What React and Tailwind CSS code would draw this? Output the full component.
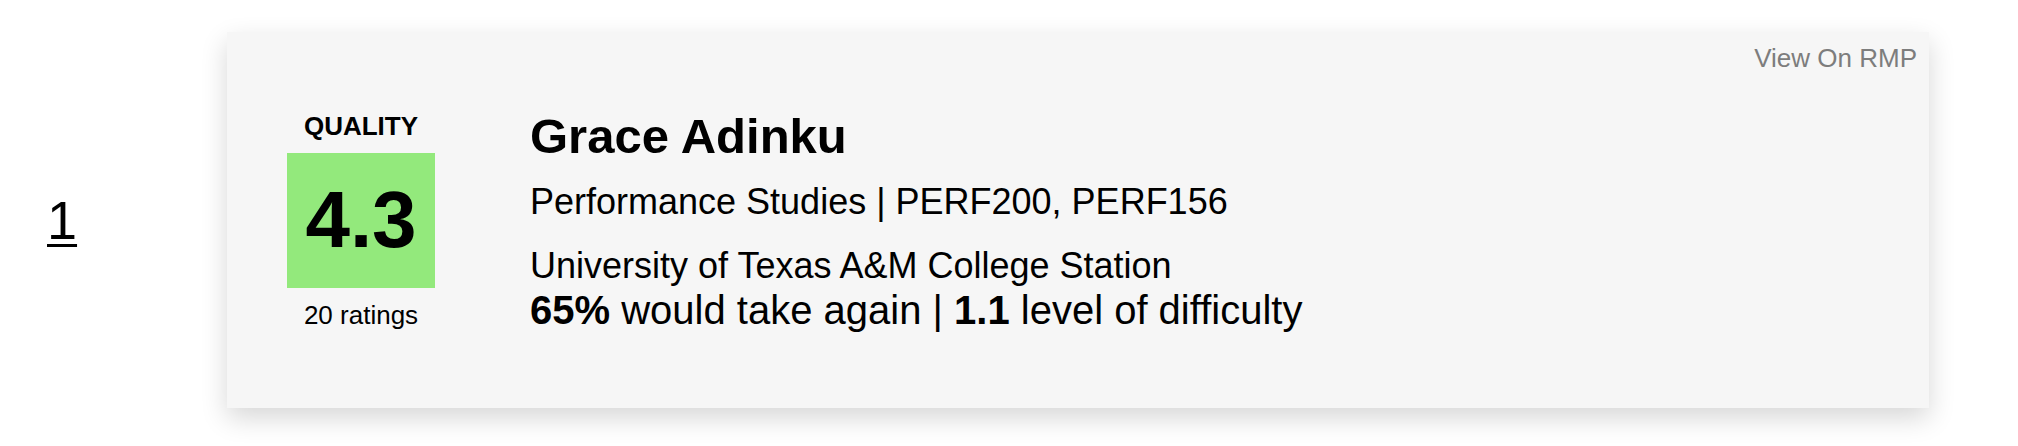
import React from 'react';

const professor = {
    rank: 1,
    name: 'Grace Adinku',
    department: 'Performance Studies',
    courses: ['PERF200', 'PERF156'],
    school: 'University of Texas A&M College Station',
    quality: '4.3',
    ratings: 20,
    takeAgain: '65%',
    difficulty: '1.1',
};

export default function App() {
    const p = professor;

    return (
        <div className="min-h-screen bg-white font-['Liberation_Sans',Arial,sans-serif] text-black">
            <div className="flex items-center pt-[32px] pl-[47px]">
                {/* Rank */}
                <a className="text-[54px] leading-none underline decoration-[3px] underline-offset-[5px] w-[180px] shrink-0">
                    {p.rank}
                </a>

                {/* Card */}
                <div className="relative flex items-center w-[1702px] h-[376px] bg-[#f6f6f6] pl-[60px] shadow-[0_10px_25px_rgba(0,0,0,0.16)]">
                    <a className="absolute top-[11px] right-[12px] text-[26px] leading-[30px] text-[#7d7d7d]">
                        View On RMP
                    </a>

                    {/* Quality */}
                    <div className="flex flex-col items-center w-[148px] shrink-0">
                        <div className="text-[26px] leading-[30px] font-bold">QUALITY</div>
                        <div className="mt-[12px] flex items-center justify-center w-[148px] h-[135px] bg-[#93e97c]">
                            <span className="text-[80px] font-bold leading-none">{p.quality}</span>
                        </div>
                        <div className="mt-[12px] text-[26px] leading-[30px]">{p.ratings} ratings</div>
                    </div>

                    {/* Details */}
                    <div className="ml-[95px] flex flex-col">
                        <h2 className="text-[49px] leading-[56px] font-bold">{p.name}</h2>
                        <p className="mt-[15px] text-[36px] leading-[45px]">
                            {p.department} | {p.courses.join(', ')}
                        </p>
                        <div className="mt-[19px]">
                            <p className="text-[36px] leading-[45px]">{p.school}</p>
                            <p className="text-[40px] leading-[44px]">
                                <span className="font-bold">{p.takeAgain}</span> would take again |{' '}
                                <span className="font-bold">{p.difficulty}</span> level of difficulty
                            </p>
                        </div>
                    </div>
                </div>
            </div>
        </div>
    );
}
